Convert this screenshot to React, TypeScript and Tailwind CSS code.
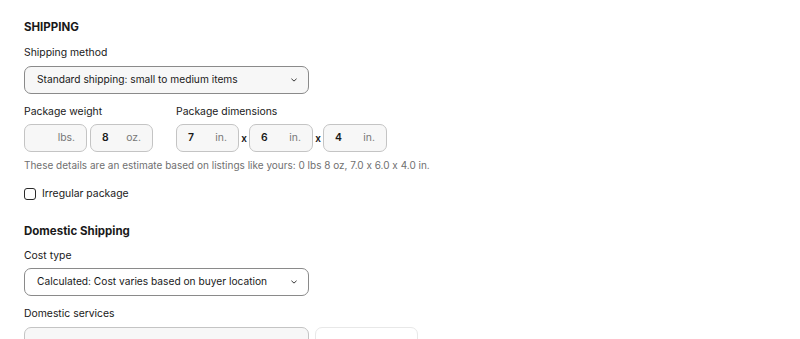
import React from "react";

const Chevron = () => (
  <svg width="8" height="6" viewBox="0 0 8 6" fill="none" className="shrink-0">
    <path d="M1.7 2 L4 4.1 L6.3 2" stroke="#3a3a3a" strokeWidth="1" strokeLinecap="round" strokeLinejoin="round" />
  </svg>
);

function Field({ value, unit, w }: { value?: string; unit: string; w: string }) {
  return (
    <div className={`${w} h-[28px] rounded-[7px] border border-[#c4c4c4] bg-[#f7f7f7] flex items-center justify-between pl-[11px] pr-[11px] text-[10.4px]`}>
      <span className="text-[#191919] font-semibold">{value ?? ""}</span>
      <span className="text-[#767676]">{unit}</span>
    </div>
  );
}

const X = () => <span className="w-[10px] text-center text-[10px] font-semibold text-[#191919]">x</span>;

export default function App() {
  return (
    <div className="w-[800px] h-[339px] overflow-hidden bg-white text-[#191919] pl-[24px] pt-[20px]" style={{ fontFamily: "Inter, 'Open Sans', sans-serif" }}>
      <div className="text-[11.5px] font-bold leading-[14px]">SHIPPING</div>
      <div className="mt-[12px] text-[10.4px] leading-[14px]">Shipping method</div>
      <div className="mt-[6px] w-[285px] h-[28px] rounded-[7px] border border-[#8a8a8a] bg-[#f7f7f7] flex items-center justify-between pl-[12px] pr-[10px] text-[10.2px]">
        <span>Standard shipping: small to medium items</span>
        <Chevron />
      </div>

      <div className="mt-[11px] flex gap-[23px]">
        <div>
          <div className="text-[10.4px] leading-[14px]">Package weight</div>
          <div className="mt-[5px] flex gap-[3px]">
            <Field unit="lbs." w="w-[63px]" />
            <Field value="8" unit="oz." w="w-[63px]" />
          </div>
        </div>
        <div>
          <div className="text-[10.4px] leading-[14px]">Package dimensions</div>
          <div className="mt-[5px] flex items-center">
            <Field value="7" unit="in." w="w-[63px]" />
            <X />
            <Field value="6" unit="in." w="w-[64px]" />
            <X />
            <Field value="4" unit="in." w="w-[64px]" />
          </div>
        </div>
      </div>

      <div className="mt-[6px] text-[10px] leading-[14px] text-[#707070]">
        These details are an estimate based on listings like yours: 0 lbs 8 oz, 7.0 x 6.0 x 4.0 in.
      </div>

      <label className="mt-[15px] flex items-center gap-[6px] text-[10.4px] leading-[14px]">
        <span className="w-[12px] h-[12px] rounded-[3px] border border-[#2a2a2a] bg-white" />
        <span>Irregular package</span>
      </label>

      <div className="mt-[23px] text-[11.5px] font-bold leading-[14px]">Domestic Shipping</div>
      <div className="mt-[11px] text-[10.4px] leading-[14px]">Cost type</div>
      <div className="mt-[5px] w-[285px] h-[28px] rounded-[7px] border border-[#8a8a8a] bg-white flex items-center justify-between pl-[12px] pr-[10px] text-[10.2px]">
        <span>Calculated: Cost varies based on buyer location</span>
        <Chevron />
      </div>
      <div className="mt-[11px] text-[10.4px] leading-[14px]">Domestic services</div>
      <div className="mt-[6px] flex gap-[6px]">
        <div className="w-[285px] h-[28px] rounded-[7px] border border-[#c4c4c4] bg-[#f7f7f7]" />
        <div className="w-[103px] h-[28px] rounded-[7px] border border-[#e8e8e8] bg-white" />
      </div>
    </div>
  );
}
